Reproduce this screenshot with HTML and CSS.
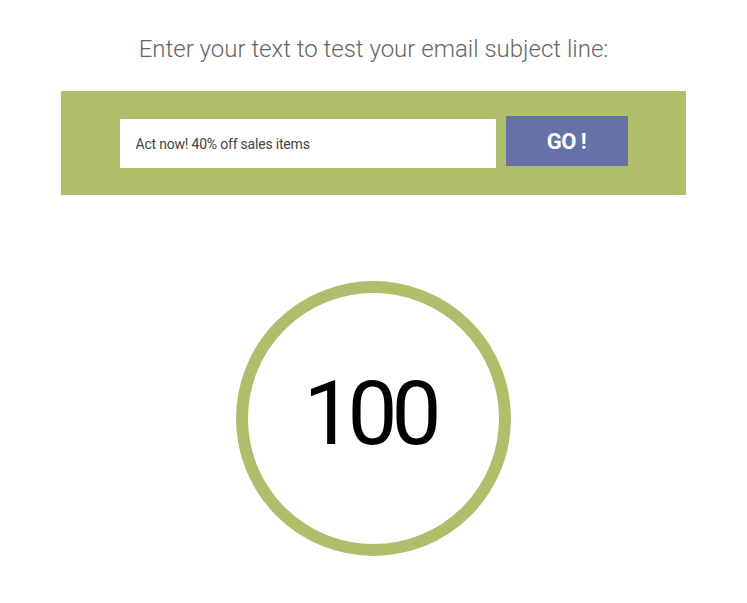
FILE: index.html
```html
<!DOCTYPE html>
<html>
<head>
    <title>Subject Line Tester</title>
    <link rel="stylesheet" href="styles.css">
</head>
<body>
    <div class="tester">
        <h2 class="tester-title">Enter your text to test your email subject line:</h2>

        <form class="subject-form">
            <input type="text" class="subject-input" value="Act now! 40% off sales items">
            <button type="button" class="go-button">GO !</button>
        </form>

        <div class="score">
            <div class="score-ring">
                <span class="score-value">100</span>
            </div>
        </div>
    </div>
</body>
</html>
```

FILE: styles.css
```css
:root {
    --green: #afbe6b;
    --blue: #6672a7;
    --title-color: #666;
    --text-color: #444;
}

body {
    margin: 0;
    padding: 0;
    background: white;
    font-family: Roboto, "Liberation Sans", Arial, sans-serif;
}

.tester {
    width: 625px;
    margin: 0 auto;
    padding-top: 29px;
}

.tester-title {
    margin: 0 0 22px;
    text-align: center;
    font-size: 24px;
    font-weight: 300;
    line-height: 40px;
    letter-spacing: 0;
    color: var(--title-color);
}

.subject-form {
    display: flex;
    align-items: flex-start;
    justify-content: center;
    gap: 10px;
    margin: 0;
    padding: 25px 0 27px;
    background: var(--green);
}

.subject-input {
    width: 376px;
    height: 49px;
    box-sizing: border-box;
    margin-top: 3px;
    padding: 0 16px;
    border: none;
    outline: none;
    background: white;
    color: var(--text-color);
    font-family: inherit;
    font-size: 14px;
    letter-spacing: -0.2px;
}

.go-button {
    width: 122px;
    height: 50px;
    padding: 0;
    border: none;
    background: var(--blue);
    color: white;
    cursor: pointer;
    font-family: inherit;
    font-weight: 700;
    font-size: 22px;
    letter-spacing: -0.5px;
}

.score {
    display: flex;
    justify-content: center;
    padding-top: 86px;
}

.score-ring {
    width: 275px;
    height: 275px;
    box-sizing: border-box;
    border: 12px solid var(--green);
    border-radius: 50%;
    display: flex;
    align-items: center;
    justify-content: center;
}

.score-value {
    margin: -11px 8px 0 0;
    font-size: 89px;
    font-weight: 400;
    letter-spacing: -6px;
    color: #000;
}
```
